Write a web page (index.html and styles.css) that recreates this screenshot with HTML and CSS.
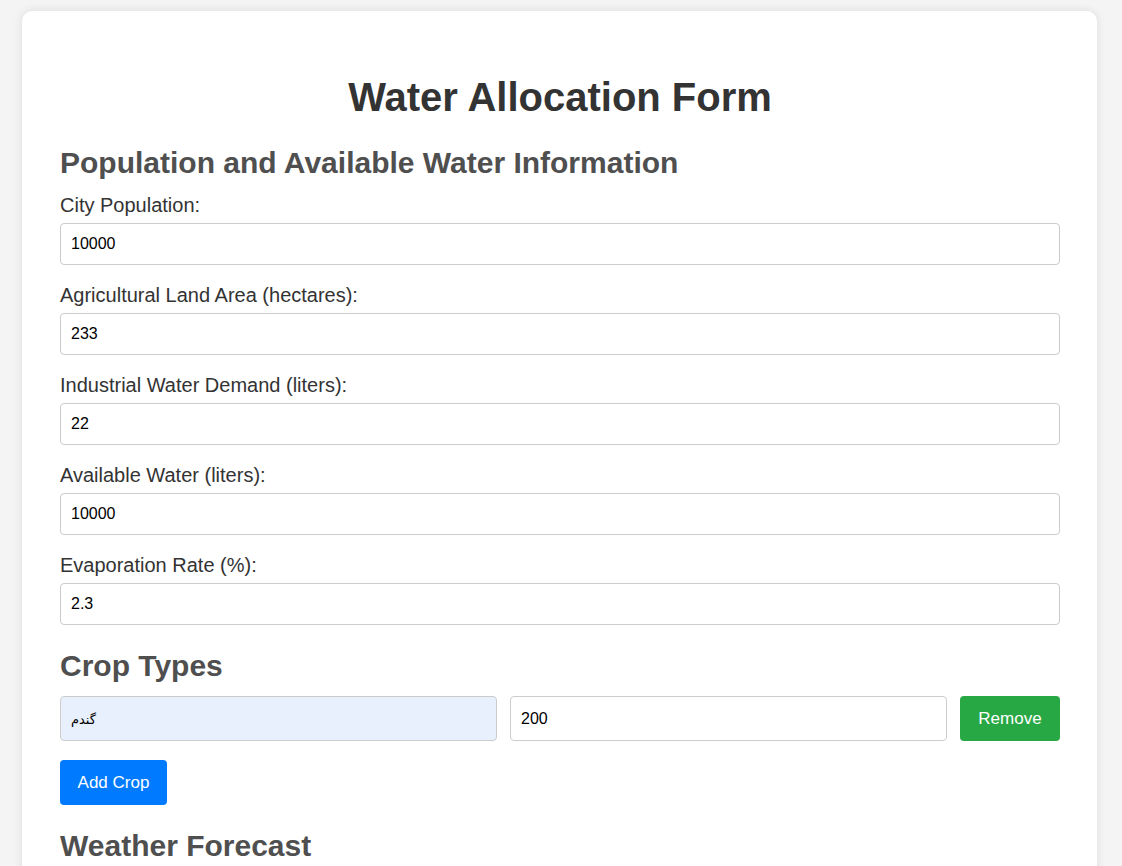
FILE: index.html
```html
<!DOCTYPE html>
<html lang="en">
<head>
<meta charset="utf-8">
<title>Water Allocation Form</title>
<link rel="stylesheet" href="styles.css">
</head>
<body>
<div class="container">
  <h1 class="title">Water Allocation Form</h1>
  <form class="form">
    <h2 class="section first">Population and Available Water Information</h2>
    <label class="label">City Population:</label>
    <input class="field" type="text" value="10000">
    <label class="label">Agricultural Land Area (hectares):</label>
    <input class="field" type="text" value="233">
    <label class="label">Industrial Water Demand (liters):</label>
    <input class="field" type="text" value="22">
    <label class="label">Available Water (liters):</label>
    <input class="field" type="text" value="10000">
    <label class="label">Evaporation Rate (%):</label>
    <input class="field" type="text" value="2.3">

    <h2 class="section crops">Crop Types</h2>
    <div class="crop-row">
      <input class="crop-input autofill" type="text" value="گندم">
      <input class="crop-input" type="text" value="200">
      <button type="button" class="btn btn-green">Remove</button>
    </div>
    <button type="button" class="btn btn-blue add">Add Crop</button>

    <h2 class="section weather">Weather Forecast</h2>
  </form>
</div>
</body>
</html>
```

FILE: styles.css
```css
html, body {
  margin: 0;
  padding: 0;
  background: #f4f4f4;
  font-family: "Liberation Sans", Arial, sans-serif;
  overflow: hidden;
}
body {
  padding-top: 11px;
}
.container {
  margin-left: 22px;
  width: 1075px;
  box-sizing: border-box;
  padding: 40px 37px 40px 38px;
  background: #fff;
  border-radius: 10px;
  box-shadow: 0 0 10px rgba(0,0,0,0.1);
  min-height: 900px;
}
.title {
  margin: 23px 0 26px;
  font-size: 40px;
  line-height: 46px;
  text-align: center;
  color: #333;
  font-weight: bold;
}
.form {
  display: flex;
  flex-direction: column;
}
.section {
  margin: 0 0 14px;
  font-size: 30px;
  line-height: 34px;
  color: #4f4f4f;
  font-weight: bold;
}
.section.crops {
  margin-top: 5px;
  margin-bottom: 13px;
}
.section.weather {
  margin-top: 24px;
}
.label {
  display: block;
  font-size: 20px;
  line-height: 22px;
  color: #333;
  margin-bottom: 7px;
}
.field {
  display: block;
  box-sizing: border-box;
  width: 100%;
  height: 42px;
  padding: 10px;
  border: 1px solid #ccc;
  border-radius: 4px;
  font-family: "Liberation Sans", Arial, sans-serif;
  font-size: 16px;
  color: #000;
  margin-bottom: 19px;
  background: #fff;
}
.crop-row {
  display: flex;
  gap: 13px;
  height: 45px;
}
.crop-input {
  flex: 1;
  min-width: 0;
  box-sizing: border-box;
  height: 45px;
  padding: 10px;
  border: 1px solid #ccc;
  border-radius: 4px;
  font-family: "Liberation Sans", Arial, sans-serif;
  font-size: 16px;
  color: #000;
  background: #fff;
}
.crop-input.autofill {
  background: #e8f0fe;
  font-family: "Noto Sans", "DejaVu Sans", sans-serif;
  font-size: 13px;
}
.btn {
  box-sizing: border-box;
  height: 45px;
  border: none;
  border-radius: 4px;
  color: #fff;
  font-family: "Liberation Sans", Arial, sans-serif;
  font-size: 17px;
  cursor: pointer;
}
.btn-green {
  width: 100px;
  background: #28a745;
}
.btn-blue {
  background: #007bff;
}
.add {
  align-self: flex-start;
  width: 107px;
  margin-top: 19px;
}
```
